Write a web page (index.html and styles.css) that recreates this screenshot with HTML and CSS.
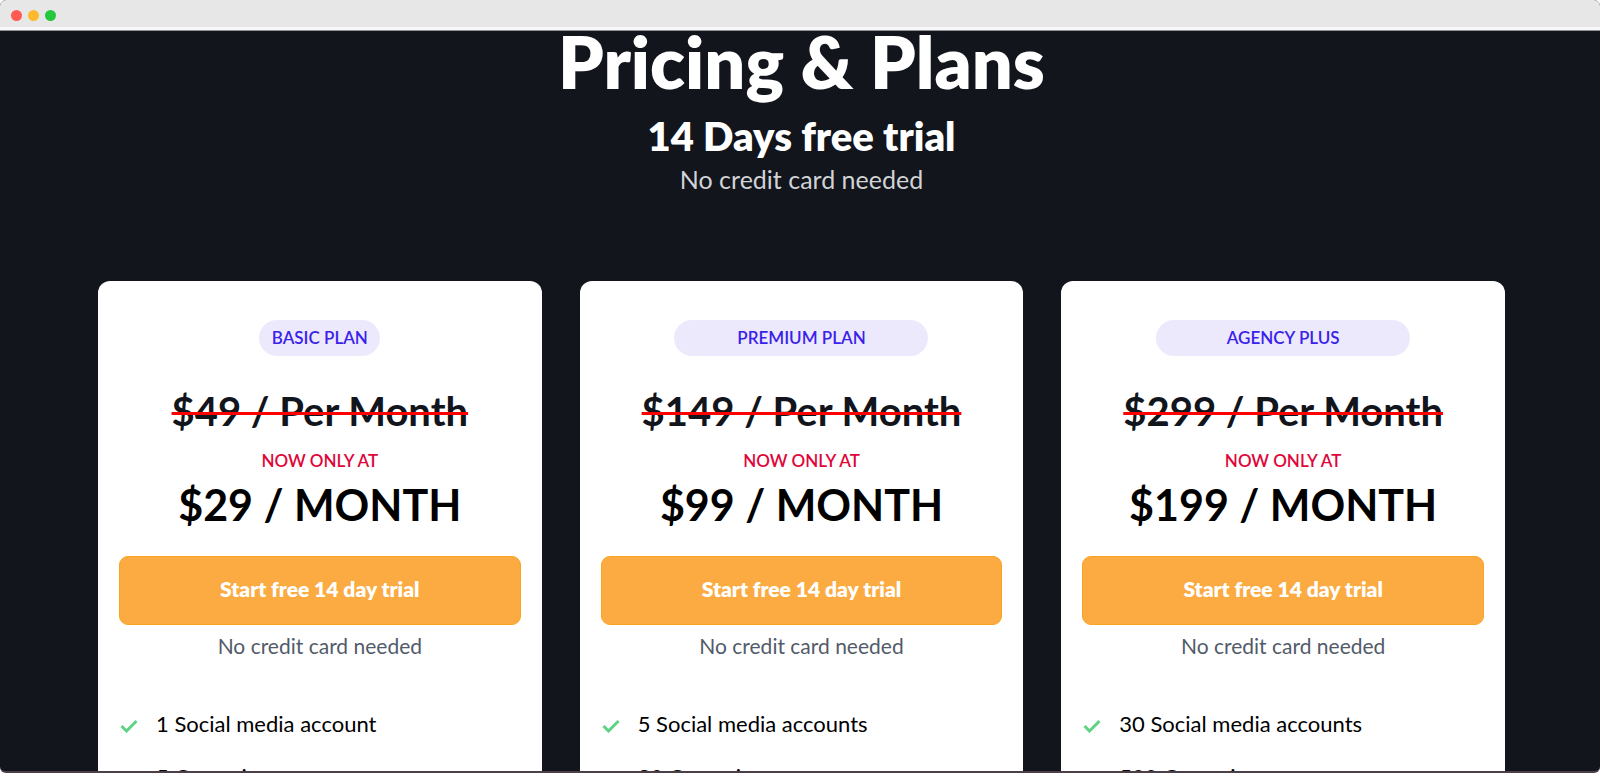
FILE: index.html
```
<!DOCTYPE html>
<html lang="en">
<head>
    <meta charset="UTF-8">
    <title>Pricing &amp; Plans</title>
    <link rel="stylesheet" href="styles.css">
</head>
<body>
<div class="window">
    <div class="titlebar">
        <span class="dot red"></span>
        <span class="dot yellow"></span>
        <span class="dot green"></span>
    </div>
    <main class="page">
        <header class="intro">
            <h1>Pricing &amp; Plans</h1>
            <h2>14 Days free trial</h2>
            <p>No credit card needed</p>
        </header>
        <div class="plans">
            <section class="card">
                <h3 class="badge small">BASIC PLAN</h3>
                <del class="old">$49 / Per Month</del>
                <p class="now">NOW ONLY AT</p>
                <p class="price">$29 / MONTH</p>
                <button type="button" class="btn">Start free 14 day trial</button>
                <p class="note">No credit card needed</p>
                <ul class="features">
                    <li><svg class="check" viewBox="0 0 18 14"><path d="M1.5 7 6.5 12 16.5 2"/></svg>1 Social media account</li>
                    <li><svg class="check" viewBox="0 0 18 14"><path d="M1.5 7 6.5 12 16.5 2"/></svg>5 Campaigns</li>
                </ul>
            </section>
            <section class="card">
                <h3 class="badge">PREMIUM PLAN</h3>
                <del class="old">$149 / Per Month</del>
                <p class="now">NOW ONLY AT</p>
                <p class="price">$99 / MONTH</p>
                <button type="button" class="btn">Start free 14 day trial</button>
                <p class="note">No credit card needed</p>
                <ul class="features">
                    <li><svg class="check" viewBox="0 0 18 14"><path d="M1.5 7 6.5 12 16.5 2"/></svg>5 Social media accounts</li>
                    <li><svg class="check" viewBox="0 0 18 14"><path d="M1.5 7 6.5 12 16.5 2"/></svg>20 Campaigns</li>
                </ul>
            </section>
            <section class="card">
                <h3 class="badge">AGENCY PLUS</h3>
                <del class="old">$299 / Per Month</del>
                <p class="now">NOW ONLY AT</p>
                <p class="price">$199 / MONTH</p>
                <button type="button" class="btn">Start free 14 day trial</button>
                <p class="note">No credit card needed</p>
                <ul class="features">
                    <li><svg class="check" viewBox="0 0 18 14"><path d="M1.5 7 6.5 12 16.5 2"/></svg>30 Social media accounts</li>
                    <li><svg class="check" viewBox="0 0 18 14"><path d="M1.5 7 6.5 12 16.5 2"/></svg>500 Campaigns</li>
                </ul>
            </section>
        </div>
    </main>
</div>
</body>
</html>
```
FILE: styles.css
```
* {
    box-sizing: border-box;
    margin: 0;
    padding: 0;
}

body {
    background: #fff;
    font-family: Lato, "Liberation Sans", sans-serif;
}

/* browser frame */
.window {
    display: flex;
    flex-direction: column;
    height: 100vh;
    overflow: hidden;
    background: #12151c;
    border-bottom: 2px solid #4c3f48;
    border-radius: 6px;
}

.titlebar {
    flex: none;
    display: flex;
    align-items: center;
    gap: 6px;
    height: 31px;
    padding-left: 11px;
    background: #e7e7e7;
    border-bottom: 1px solid #8f9291;
    box-shadow: inset 0 -3px #f8f8f8;
}

.dot {
    width: 11px;
    height: 11px;
    border-radius: 50%;
}

.red {
    background: #ff5b54;
}

.yellow {
    background: #ffb92c;
}

.green {
    background: #23c83f;
}

.page {
    padding: 0 95px 0 98px;
}

.intro {
    text-align: center;
    color: #fff;
}

.intro h1 {
    font-size: 72px;
    font-weight: 800;
    line-height: 60px;
}

.intro h2 {
    margin-top: 21px;
    font-size: 40px;
    font-weight: 800;
    line-height: 48px;
}

.intro p {
    margin-top: 3px;
    font-size: 25px;
    line-height: 32px;
    color: #d1d3d6;
}

.plans {
    display: grid;
    grid-template-columns: repeat(3, 1fr);
    gap: 38px;
    margin-top: 86px;
}

.card {
    display: flex;
    flex-direction: column;
    align-items: center;
    padding: 39px 21px;
    background: #fff;
    border-radius: 12px;
    color: #000;
}

.badge {
    width: 254px;
    background: #ece9fd;
    border-radius: 18px;
    color: #3a22ea;
    font-size: 17px;
    font-weight: 600;
    line-height: 36px;
    text-align: center;
}

.badge.small {
    width: 121px;
}

.old {
    margin-top: 31px;
    color: #12151c;
    font-size: 40px;
    font-weight: 700;
    line-height: 48px;
    text-decoration: line-through 3px #f00;
}

.now {
    margin-top: 14px;
    color: #e0063a;
    font-size: 17px;
    font-weight: 600;
    line-height: 24px;
}

.price {
    margin-top: 8px;
    font-size: 43px;
    font-weight: 700;
    line-height: 48px;
}

.btn {
    width: 100%;
    height: 69px;
    margin-top: 27px;
    padding-bottom: 4px;
    background: #fbab41;
    border: 1px solid #faa31e;
    border-radius: 9px;
    color: #fff;
    font: 800 21px Lato, "Liberation Sans", sans-serif;
    cursor: pointer;
}

.note {
    margin-top: 5px;
    color: #525b69;
    font-size: 21px;
    line-height: 32px;
}

.features {
    display: flex;
    flex-direction: column;
    gap: 21px;
    width: 100%;
    margin-top: 46px;
    list-style: none;
}

.features li {
    display: flex;
    align-items: center;
    gap: 18px;
    padding-left: 1px;
    font-size: 22px;
    line-height: 32px;
}

.check {
    width: 18px;
    height: 14px;
    margin-top: 4px;
    fill: none;
    stroke: #5fd384;
    stroke-width: 3;
}
```
